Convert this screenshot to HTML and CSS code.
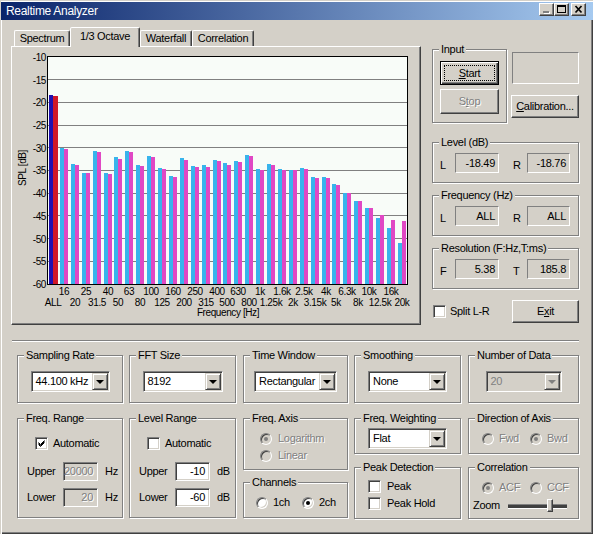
FILE: index.html
```html
<!DOCTYPE html>
<html lang="en">
<head>
    <meta charset="UTF-8">
    <title>Realtime Analyzer</title>
    <link rel="stylesheet" href="styles.css">
</head>
<body>
<div class="window">
    <div class="titlebar">
        <span class="title">Realtime Analyzer</span>
        <div class="caption-buttons">
            <span class="cap-btn">
                <svg width="13" height="11" viewBox="0 0 13 11"><rect x="4" y="8" width="6" height="2" fill="#fff"/><rect x="3" y="7" width="6" height="2" fill="#808080"/></svg>
            </span>
            <span class="cap-btn">
                <svg width="13" height="11" viewBox="0 0 13 11"><rect x="2" y="1" width="9" height="2" fill="#000"/><rect x="2.5" y="1.5" width="8" height="7" fill="none" stroke="#000"/></svg>
            </span>
            <span class="cap-btn close">
                <svg width="13" height="11" viewBox="0 0 13 11"><path d="M3.5 2 L9.5 8.5 M9.5 2 L3.5 8.5" stroke="#000" stroke-width="1.7" fill="none"/></svg>
            </span>
        </div>
    </div>

    <div class="top">
        <div class="tabctrl">
            <div class="tabs">
                <div class="tab tab-spectrum">Spectrum</div>
                <div class="tab selected">1/3 Octave</div>
                <div class="tab tab-waterfall">Waterfall</div>
                <div class="tab tab-corr">Correlation</div>
            </div>
            <div class="tab-panel">
                <svg class="chart" width="408" height="277" viewBox="12 47 408 277">
                    <text transform="translate(26 168) rotate(-90)" text-anchor="middle">SPL [dB]</text>
                    <g text-anchor="end">
                        <text x="46" y="61">-10</text>
                        <text x="46" y="84">-15</text>
                        <text x="46" y="106">-20</text>
                        <text x="46" y="129">-25</text>
                        <text x="46" y="152">-30</text>
                        <text x="46" y="174">-35</text>
                        <text x="46" y="197">-40</text>
                        <text x="46" y="220">-45</text>
                        <text x="46" y="243">-50</text>
                        <text x="46" y="265">-55</text>
                        <text x="46" y="288">-60</text>
                    </g>
                    <rect x="48" y="57" width="359" height="227" fill="#f8fcf8"/>
                    <g stroke="#808080">
                        <line x1="48" x2="407" y1="79.5" y2="79.5"/>
                        <line x1="48" x2="407" y1="102.5" y2="102.5"/>
                        <line x1="48" x2="407" y1="125.5" y2="125.5"/>
                        <line x1="48" x2="407" y1="147.5" y2="147.5"/>
                        <line x1="48" x2="407" y1="170.5" y2="170.5"/>
                        <line x1="48" x2="407" y1="193.5" y2="193.5"/>
                        <line x1="48" x2="407" y1="215.5" y2="215.5"/>
                        <line x1="48" x2="407" y1="238.5" y2="238.5"/>
                        <line x1="48" x2="407" y1="261.5" y2="261.5"/>
                    </g>
                    <!-- banda ALL -->
                    <rect x="49" y="95" width="4" height="189" fill="#2010b0"/>
                    <rect x="53" y="96" width="5" height="188" fill="#d01828"/>
                    <!-- canal L -->
                    <g fill="#38b4ec">
                        <rect x="60" y="148" width="4" height="136"/>
                        <rect x="71" y="164" width="4" height="120"/>
                        <rect x="82" y="173" width="4" height="111"/>
                        <rect x="93" y="151" width="4" height="133"/>
                        <rect x="104" y="173" width="4" height="111"/>
                        <rect x="114" y="157" width="4" height="127"/>
                        <rect x="125" y="151" width="4" height="133"/>
                        <rect x="136" y="165" width="4" height="119"/>
                        <rect x="147" y="156" width="4" height="128"/>
                        <rect x="158" y="168" width="4" height="116"/>
                        <rect x="169" y="176" width="4" height="108"/>
                        <rect x="180" y="158" width="4" height="126"/>
                        <rect x="191" y="166" width="4" height="118"/>
                        <rect x="202" y="165" width="4" height="119"/>
                        <rect x="213" y="160" width="4" height="124"/>
                        <rect x="223" y="163" width="4" height="121"/>
                        <rect x="234" y="161" width="4" height="123"/>
                        <rect x="245" y="155" width="4" height="129"/>
                        <rect x="256" y="169" width="4" height="115"/>
                        <rect x="267" y="164" width="4" height="120"/>
                        <rect x="278" y="169" width="4" height="115"/>
                        <rect x="289" y="170" width="4" height="114"/>
                        <rect x="300" y="168" width="4" height="116"/>
                        <rect x="311" y="177" width="4" height="107"/>
                        <rect x="322" y="177" width="4" height="107"/>
                        <rect x="332" y="184" width="4" height="100"/>
                        <rect x="343" y="193" width="4" height="91"/>
                        <rect x="354" y="201" width="4" height="83"/>
                        <rect x="365" y="208" width="4" height="76"/>
                        <rect x="376" y="218" width="4" height="66"/>
                        <rect x="387" y="228" width="4" height="56"/>
                        <rect x="398" y="243" width="4" height="41"/>
                    </g>
                    <!-- canal R -->
                    <g fill="#e048c4">
                        <rect x="64" y="149" width="4" height="135"/>
                        <rect x="75" y="165" width="4" height="119"/>
                        <rect x="86" y="173" width="4" height="111"/>
                        <rect x="97" y="152" width="4" height="132"/>
                        <rect x="108" y="174" width="4" height="110"/>
                        <rect x="118" y="159" width="4" height="125"/>
                        <rect x="129" y="152" width="4" height="132"/>
                        <rect x="140" y="166" width="4" height="118"/>
                        <rect x="151" y="157" width="4" height="127"/>
                        <rect x="162" y="169" width="4" height="115"/>
                        <rect x="173" y="177" width="4" height="107"/>
                        <rect x="184" y="160" width="4" height="124"/>
                        <rect x="195" y="167" width="4" height="117"/>
                        <rect x="206" y="167" width="4" height="117"/>
                        <rect x="217" y="161" width="4" height="123"/>
                        <rect x="227" y="165" width="4" height="119"/>
                        <rect x="238" y="162" width="4" height="122"/>
                        <rect x="249" y="156" width="4" height="128"/>
                        <rect x="260" y="170" width="4" height="114"/>
                        <rect x="271" y="165" width="4" height="119"/>
                        <rect x="282" y="170" width="4" height="114"/>
                        <rect x="293" y="170" width="4" height="114"/>
                        <rect x="304" y="169" width="4" height="115"/>
                        <rect x="315" y="178" width="4" height="106"/>
                        <rect x="326" y="178" width="4" height="106"/>
                        <rect x="336" y="185" width="4" height="99"/>
                        <rect x="347" y="193" width="4" height="91"/>
                        <rect x="358" y="201" width="4" height="83"/>
                        <rect x="369" y="208" width="4" height="76"/>
                        <rect x="380" y="215" width="4" height="69"/>
                        <rect x="391" y="220" width="4" height="64"/>
                        <rect x="402" y="221" width="4" height="63"/>
                    </g>
                    <rect x="47.5" y="56.5" width="360" height="228" fill="none" stroke="#000"/>
                    <g text-anchor="middle">
                        <text x="64" y="295">16</text>
                        <text x="86" y="295">25</text>
                        <text x="108" y="295">40</text>
                        <text x="129" y="295">63</text>
                        <text x="151" y="295">100</text>
                        <text x="173" y="295">160</text>
                        <text x="195" y="295">250</text>
                        <text x="217" y="295">400</text>
                        <text x="238" y="295">630</text>
                        <text x="260" y="295">1k</text>
                        <text x="282" y="295">1.6k</text>
                        <text x="304" y="295">2.5k</text>
                        <text x="326" y="295">4k</text>
                        <text x="347" y="295">6.3k</text>
                        <text x="369" y="295">10k</text>
                        <text x="391" y="295">16k</text>

                        <text x="53" y="306">ALL</text>
                        <text x="75" y="306">20</text>
                        <text x="97" y="306">31.5</text>
                        <text x="118" y="306">50</text>
                        <text x="140" y="306">80</text>
                        <text x="162" y="306">125</text>
                        <text x="184" y="306">200</text>
                        <text x="206" y="306">315</text>
                        <text x="227" y="306">500</text>
                        <text x="249" y="306">800</text>
                        <text x="271" y="306">1.25k</text>
                        <text x="293" y="306">2k</text>
                        <text x="315" y="306">3.15k</text>
                        <text x="336" y="306">5k</text>
                        <text x="358" y="306">8k</text>
                        <text x="380" y="306">12.5k</text>
                        <text x="402" y="306">20k</text>

                        <text x="228" y="316">Frequency  [Hz]</text>
                    </g>
                </svg>
            </div>
        </div>

        <div class="side">
            <div class="input-row">
                <fieldset class="group input-group">
                    <legend>Input</legend>
                    <div class="btn default start"><span class="focus"><u>S</u>tart</span></div>
                    <div class="btn disabled stop">S<u>t</u>op</div>
                </fieldset>
                <div class="input-extra">
                    <div class="blank-frame"></div>
                    <div class="btn calib"><u>C</u>alibration...</div>
                </div>
            </div>

            <fieldset class="group readout first">
                <legend>Level (dB)</legend>
                <div class="readout-row">
                    <span class="ro-label">L</span><span class="ro-value lv">-18.49</span>
                    <span class="ro-label r">R</span><span class="ro-value rv">-18.76</span>
                </div>
            </fieldset>
            <fieldset class="group readout">
                <legend>Frequency (Hz)</legend>
                <div class="readout-row">
                    <span class="ro-label">L</span><span class="ro-value lv">ALL</span>
                    <span class="ro-label r">R</span><span class="ro-value rv">ALL</span>
                </div>
            </fieldset>
            <fieldset class="group readout">
                <legend>Resolution (F:Hz,T:ms)</legend>
                <div class="readout-row">
                    <span class="ro-label">F</span><span class="ro-value lv">5.38</span>
                    <span class="ro-label r">T</span><span class="ro-value rv">185.8</span>
                </div>
            </fieldset>

            <div class="split-row">
                <span class="check"></span>
                <span class="check-text">Split L-R</span>
                <div class="btn exit">E<u>x</u>it</div>
            </div>
        </div>
    </div>

    <div class="separator"></div>

    <div class="bottom">
        <div class="col col1">
            <fieldset class="group g-select">
                <legend>Sampling Rate</legend>
                <div class="combo combo-rate"><span class="value">44.100 kHz</span><span class="drop"></span></div>
            </fieldset>
            <fieldset class="group g-range">
                <legend>Freq. Range</legend>
                <div class="auto-row">
                    <span class="check">
                        <svg width="7" height="7" viewBox="0 0 7 7"><path d="M0.5 2.5 L2.5 4.5 L6.5 0.5 M0.5 3.5 L2.5 5.5 L6.5 1.5 M0.5 4.5 L2.5 6.5 L6.5 2.5" stroke="#000" fill="none"/></svg>
                    </span>
                    <span class="label">Automatic</span>
                </div>
                <div class="field-row">
                    <span class="field-label">Upper</span><span class="edit disabled">20000</span><span class="unit">Hz</span>
                </div>
                <div class="field-row">
                    <span class="field-label">Lower</span><span class="edit disabled">20</span><span class="unit">Hz</span>
                </div>
            </fieldset>
        </div>

        <div class="col col2">
            <fieldset class="group g-select">
                <legend>FFT Size</legend>
                <div class="combo combo-fft"><span class="value">8192</span><span class="drop"></span></div>
            </fieldset>
            <fieldset class="group g-range">
                <legend>Level Range</legend>
                <div class="auto-row">
                    <span class="check"></span>
                    <span class="label">Automatic</span>
                </div>
                <div class="field-row">
                    <span class="field-label">Upper</span><span class="edit">-10</span><span class="unit">dB</span>
                </div>
                <div class="field-row">
                    <span class="field-label">Lower</span><span class="edit">-60</span><span class="unit">dB</span>
                </div>
            </fieldset>
        </div>

        <div class="col col3">
            <fieldset class="group g-select">
                <legend>Time Window</legend>
                <div class="combo combo-window"><span class="value">Rectangular</span><span class="drop"></span></div>
            </fieldset>
            <fieldset class="group g-axis">
                <legend>Freq. Axis</legend>
                <div class="opt-row axis-first"><span class="radio dis on"></span><span class="opt-text dis">Logarithm</span></div>
                <div class="opt-row axis-second"><span class="radio dis"></span><span class="opt-text dis">Linear</span></div>
            </fieldset>
            <fieldset class="group g-channels">
                <legend>Channels</legend>
                <div class="opt-row channels">
                    <span class="opt opt-1ch"><span class="radio"></span><span class="opt-text">1ch</span></span>
                    <span class="opt"><span class="radio on"></span><span class="opt-text">2ch</span></span>
                </div>
            </fieldset>
        </div>

        <div class="col col4">
            <fieldset class="group g-select">
                <legend>Smoothing</legend>
                <div class="combo combo-smooth"><span class="value">None</span><span class="drop"></span></div>
            </fieldset>
            <fieldset class="group g-small">
                <legend>Freq. Weighting</legend>
                <div class="combo combo-weight"><span class="value">Flat</span><span class="drop"></span></div>
            </fieldset>
            <fieldset class="group g-peak">
                <legend>Peak Detection</legend>
                <div class="opt-row peak-first"><span class="check"></span><span class="opt-text">Peak</span></div>
                <div class="opt-row peak-second"><span class="check"></span><span class="opt-text">Peak Hold</span></div>
            </fieldset>
        </div>

        <div class="col col5">
            <fieldset class="group g-select">
                <legend>Number of Data</legend>
                <div class="combo combo-count disabled"><span class="value">20</span><span class="drop"></span></div>
            </fieldset>
            <fieldset class="group g-small">
                <legend>Direction of Axis</legend>
                <div class="opt-row pair">
                    <span class="opt opt-left"><span class="radio dis"></span><span class="opt-text dis">Fwd</span></span>
                    <span class="opt"><span class="radio dis on"></span><span class="opt-text dis">Bwd</span></span>
                </div>
            </fieldset>
            <fieldset class="group g-peak">
                <legend>Correlation</legend>
                <div class="opt-row pair">
                    <span class="opt opt-left"><span class="radio dis on"></span><span class="opt-text dis">ACF</span></span>
                    <span class="opt"><span class="radio dis"></span><span class="opt-text dis">CCF</span></span>
                </div>
                <div class="opt-row zoom-row">
                    <span class="zoom-label">Zoom</span>
                    <span class="slider"><span class="thumb"></span></span>
                </div>
            </fieldset>
        </div>
    </div>
</div>
</body>
</html>
```

FILE: styles.css
```css
* {
    box-sizing: border-box;
}

body {
    margin: 0;
    background-color: #d4d0c8;
    font-family: "Liberation Sans", Arial, sans-serif;
    font-size: 11px;
    line-height: 13px;
    letter-spacing: -0.3px;
    color: #000;
}

.window {
    width: 593px;
    height: 534px;
    overflow: hidden;
    padding-top: 2px;
    background-color: #d4d0c8;
    box-shadow: inset 1px 1px #d4d0c8, inset 2px 2px #fff, inset -1px -1px #404040, inset -2px -2px #808080;
}

/* Barra de título */
.titlebar {
    display: flex;
    height: 18px;
    margin-left: 1px;
    padding-left: 5px;
    background: linear-gradient(to right, #0a246a, #a6caf0);
    color: #fff;
}

.title {
    font-size: 12px;
    line-height: 18px;
}

.caption-buttons {
    display: flex;
    margin: 1px 7px 0 auto;
}

.cap-btn {
    width: 15px;
    height: 13px;
    border: 1px solid;
    border-color: #fff #404040 #404040 #fff;
    box-shadow: inset -1px -1px #808080;
    background-color: #d4d0c8;
}

.cap-btn svg {
    display: block;
}

.cap-btn.close {
    margin-left: 2px;
}

/* Zona superior: pestañas + panel derecho */
.top {
    display: flex;
    height: 320px;
}

.tabctrl {
    width: 410px;
    margin-left: 11px;
    padding-top: 7px;
}

.tabs {
    display: flex;
    align-items: flex-end;
    height: 19px;
    padding-left: 3px;
}

.tab {
    height: 16px;
    border: 1px solid;
    border-bottom: 0;
    border-color: #fff #404040 transparent #fff;
    border-radius: 2px 2px 0 0;
    box-shadow: inset -1px 0 #808080;
    line-height: 14px;
    text-align: center;
}

.tab-spectrum {
    width: 56px;
}

.tab-waterfall {
    width: 52px;
}

.tab-corr {
    width: 62px;
}

.tab.selected {
    position: relative;
    z-index: 1;
    width: 70px;
    height: 20px;
    margin-bottom: -1px;
    padding-top: 1px;
    line-height: 15px;
    background-color: #d4d0c8;
}

.tab-panel {
    height: 279px;
    border: 1px solid;
    border-color: #fff #404040 #404040 #fff;
    box-shadow: inset -1px -1px #808080;
}

.chart {
    display: block;
}

.chart text {
    font-family: "Liberation Sans", Arial, sans-serif;
    font-size: 10px;
    letter-spacing: -0.4px;
    fill: #000;
}

/* Marcos de grupo */
.group {
    margin: 0;
    padding: 0;
    min-width: 0;
    border: 1px solid #808080;
    box-shadow: inset 1px 1px #fff, 1px 1px #fff;
}

.group legend {
    margin-left: 6px;
    padding: 0 2px;
    line-height: 13px;
    background-color: #d4d0c8;
}

.dis {
    color: #808080;
    text-shadow: 1px 1px #fff;
}

/* Botones */
.btn {
    display: flex;
    align-items: center;
    justify-content: center;
    border: 1px solid;
    border-color: #fff #404040 #404040 #fff;
    box-shadow: inset -1px -1px #808080;
    background-color: #d4d0c8;
}

.btn.default {
    padding: 3px;
    border-color: #000;
    box-shadow: inset 1px 1px #fff, inset -1px -1px #404040, inset -2px -2px #808080;
}

.btn .focus {
    flex: 1;
    align-self: stretch;
    display: flex;
    align-items: center;
    justify-content: center;
    border: 1px dotted #000;
}

.btn.disabled {
    color: #808080;
    text-shadow: 1px 1px #fff;
}

/* Panel derecho */
.side {
    width: 148px;
    margin-left: 10px;
}

.input-row {
    display: flex;
    margin-top: 23px;
}

.input-group {
    width: 75px;
    height: 80px;
    margin-left: 1px;
}

.input-group .btn {
    width: 59px;
    margin-left: 7px;
}

.btn.start {
    height: 24px;
    margin-top: 5px;
}

.btn.stop {
    height: 25px;
    margin-top: 4px;
}

.input-extra {
    margin-left: 5px;
}

.blank-frame {
    width: 67px;
    height: 32px;
    margin-top: 9px;
    border: 1px solid;
    border-color: #808080 #fff #fff #808080;
}

.btn.calib {
    width: 68px;
    height: 23px;
    margin: 11px 0 0 -1px;
}

.readout {
    width: 147px;
    height: 47px;
    margin: 6px 0 0 1px;
}

.readout.first {
    margin-top: 13px;
}

.readout-row {
    display: flex;
    align-items: center;
    margin-top: 4px;
    padding-left: 7px;
}

.ro-label {
    width: 15px;
    margin-top: 4px;
}

.ro-label.r {
    width: 14px;
    margin-left: 14px;
}

.ro-value {
    height: 20px;
    padding-right: 3px;
    border: 1px solid;
    border-color: #808080 #fff #fff #808080;
    line-height: 18px;
    text-align: right;
}

.ro-value.lv {
    width: 44px;
}

.ro-value.rv {
    width: 43px;
}

.split-row {
    display: flex;
    align-items: center;
    height: 23px;
    margin-top: 11px;
}

.split-row .check {
    margin-left: 2px;
}

.check-text {
    margin-left: 4px;
}

.btn.exit {
    width: 67px;
    height: 23px;
    margin-left: auto;
}

.separator {
    width: 567px;
    height: 2px;
    margin-left: 12px;
    border-top: 1px solid #808080;
    border-bottom: 1px solid #fff;
}

/* Zona inferior */
.bottom {
    display: flex;
    margin: 7px 0 0 17px;
}

.col {
    display: flex;
    flex-direction: column;
}

.col1 { width: 106px; }
.col2 { width: 107px; margin-left: 6px; }
.col3 { width: 105px; margin-left: 7px; }
.col4 { width: 107px; margin-left: 6px; }
.col5 { width: 111px; margin-left: 7px; }

.g-select {
    height: 54px;
}

.g-range {
    height: 106px;
    margin-top: 9px;
}

.g-axis {
    height: 58px;
    margin-top: 9px;
}

.g-channels {
    height: 42px;
    margin-top: 6px;
}

.g-small {
    height: 42px;
    margin-top: 9px;
}

.g-peak {
    height: 58px;
    margin-top: 7px;
}

/* Combos */
.combo {
    display: flex;
    height: 21px;
    margin: 9px auto 0;
    padding: 1px;
    border: 1px solid;
    border-color: #808080 #fff #fff #808080;
    box-shadow: inset 1px 1px #404040, inset -1px -1px #d4d0c8;
    background-color: #fff;
}

.combo .value {
    flex: 1;
    padding-left: 3px;
    line-height: 17px;
}

.combo .drop {
    display: flex;
    align-items: center;
    justify-content: center;
    width: 16px;
    height: 17px;
    border: 1px solid;
    border-color: #d4d0c8 #404040 #404040 #d4d0c8;
    box-shadow: inset 1px 1px #fff, inset -1px -1px #808080;
    background-color: #d4d0c8;
}

.combo .drop::after {
    content: "";
    border-style: solid;
    border-width: 4px 4px 0;
    border-color: #000 transparent transparent;
}

.combo.disabled {
    background-color: #d4d0c8;
    color: #808080;
}

.combo.disabled .drop::after {
    border-top-color: #808080;
}

.combo-rate { width: 79px; }
.combo-fft { width: 80px; }
.combo-window { width: 83px; }
.combo-smooth { width: 79px; }
.combo-count { width: 76px; }

.combo-weight {
    width: 79px;
    margin-top: 3px;
}

/* Casillas y botones de radio */
.check {
    display: flex;
    align-items: center;
    justify-content: center;
    flex: none;
    width: 13px;
    height: 13px;
    border: 1px solid;
    border-color: #808080 #fff #fff #808080;
    box-shadow: inset 1px 1px #404040, inset -1px -1px #d4d0c8;
    background-color: #fff;
}

.check svg {
    display: block;
}

.radio {
    position: relative;
    flex: none;
    width: 12px;
    height: 12px;
    border: 1px solid;
    border-color: #808080 #fff #fff #808080;
    border-radius: 50%;
    box-shadow: inset 1px 1px #404040, inset -1px -1px #d4d0c8;
    background-color: #fff;
}

.radio.on::after {
    content: "";
    position: absolute;
    left: 3px;
    top: 3px;
    width: 4px;
    height: 4px;
    border-radius: 50%;
    background-color: #000;
}

.radio.dis {
    background-color: #d4d0c8;
}

.radio.dis.on::after {
    background-color: #808080;
}

.opt-row {
    display: flex;
    align-items: center;
    height: 13px;
}

.opt {
    display: flex;
    align-items: center;
}

.opt-text {
    margin-left: 5px;
}

.auto-row {
    display: flex;
    align-items: center;
    margin-top: 12px;
    padding-left: 17px;
}

.auto-row .label {
    margin-left: 5px;
}

.field-row {
    display: flex;
    align-items: center;
    height: 19px;
    margin-top: 12px;
    padding-left: 9px;
}

.field-row + .field-row {
    margin-top: 7px;
}

.field-label {
    width: 36px;
}

.edit {
    width: 35px;
    height: 19px;
    padding-right: 4px;
    border: 1px solid;
    border-color: #808080 #fff #fff #808080;
    box-shadow: inset 1px 1px #404040, inset -1px -1px #d4d0c8;
    background-color: #fff;
    line-height: 17px;
    text-align: right;
}

.edit.disabled {
    background-color: #d4d0c8;
    color: #808080;
    text-shadow: 1px 1px #fff;
}

.unit {
    margin-left: 7px;
}

.axis-first {
    margin-top: 7px;
    padding-left: 16px;
}

.axis-second {
    margin-top: 4px;
    padding-left: 16px;
}

.axis-first .opt-text,
.axis-second .opt-text {
    margin-left: 6px;
}

.channels {
    margin-top: 7px;
    padding-left: 12px;
}

.opt-1ch {
    width: 46px;
}

.peak-first {
    margin-top: 6px;
    padding-left: 13px;
}

.peak-second {
    margin-top: 4px;
    padding-left: 13px;
}

.peak-first .opt-text,
.peak-second .opt-text {
    margin-left: 6px;
}

.pair {
    margin-top: 7px;
    padding-left: 13px;
}

.opt-left {
    width: 48px;
}

.zoom-row {
    margin-top: 5px;
    padding-left: 4px;
}

.zoom-label {
    width: 35px;
}

.slider {
    position: relative;
    width: 59px;
    height: 13px;
}

.slider::before {
    content: "";
    position: absolute;
    left: 0;
    right: 0;
    top: 5px;
    height: 3px;
    border-top: 1px solid #808080;
    border-bottom: 1px solid #fff;
    background-color: #404040;
}

.slider .thumb {
    position: absolute;
    left: 39px;
    top: 0;
    width: 6px;
    height: 13px;
    border: 1px solid;
    border-color: #fff #404040 #404040 #fff;
    box-shadow: inset -1px -1px #808080;
    background-color: #d4d0c8;
}
```
